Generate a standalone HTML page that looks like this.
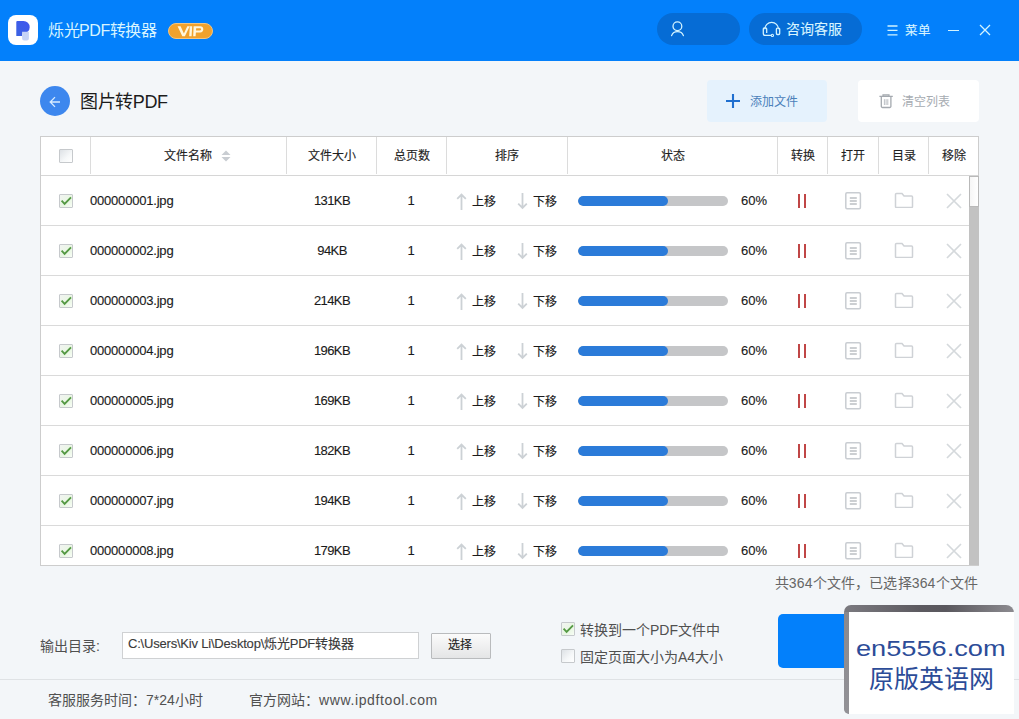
<!DOCTYPE html><html lang="zh-CN"><head><meta charset="utf-8"><style>
*{margin:0;padding:0;box-sizing:border-box}
html,body{width:1019px;height:719px;overflow:hidden;background:#f3f6f9;font-family:"Liberation Sans",sans-serif;color:#333}
.a{position:absolute}
#hdr{left:0;top:0;width:1019px;height:61px;background:#0380fb}
.logo{left:8px;top:15px;width:30px;height:30px;background:#fff;border-radius:8px}
.title{left:48px;top:20px;font-size:16px;line-height:22px;color:#d8f4ff;white-space:nowrap;letter-spacing:-0.45px}
.vip{left:168px;top:23px;width:45px;height:16px;border-radius:8px;background:#f0a22e;border:1px solid #f4c57e}
.pill{top:13px;height:32px;border-radius:16px;background:#066cd5}
.htxt{-webkit-text-stroke:0.12px currentColor;color:#d8f4ff;font-size:14px;line-height:20px;white-space:nowrap}
.back{left:40px;top:86px;width:30px;height:30px;border-radius:15px;background:#3d87ee}
.ptitle{left:80px;top:90px;font-size:18px;line-height:24px;color:#1c1c1c;white-space:nowrap;letter-spacing:-0.4px}
.btnadd{left:707px;top:80px;width:120px;height:42px;background:#e5f2fd;border-radius:4px}
.btnclr{left:858px;top:80px;width:121px;height:42px;background:#fff;border-radius:4px}
#tbl{left:40px;top:136px;width:939px;height:430px;background:#fff;border:1px solid #cdcdcd}
.th{-webkit-text-stroke:0.15px currentColor;font-size:12px;line-height:16px;color:#1f1f1f;white-space:nowrap;top:148px}
.vl{width:1px;background:#dcdcdc;top:137px;height:37px}
.hl{left:41px;width:928px;height:1px;background:#dadada}
.td{-webkit-text-stroke:0.12px currentColor;font-size:13px;line-height:16px;color:#1a1a1a;white-space:nowrap}
.tdc{-webkit-text-stroke:0.15px currentColor;font-size:12px;line-height:16px;color:#1a1a1a;white-space:nowrap}
.cb{width:14px;height:14px;border:1px solid #c6c9cc;background:linear-gradient(135deg,#dde1e5,#f6f8f9 60%,#fff);border-radius:1px}
.cbk{background:linear-gradient(135deg,#f2f4f2,#e8f6e2 60%,#f8fdf6)}
.prog{left:578px;width:150px;height:10px;border-radius:5px;background:#c5c6c8;overflow:hidden}
.prog i{display:block;width:90px;height:10px;border-radius:5px;background:#2b7bd9}
.foot{font-size:14px;line-height:18px;color:#505050;white-space:nowrap}
</style></head><body>
<div id="hdr" class="a"></div>
<div class="a logo"><svg width="30" height="30" viewBox="0 0 30 30" style="position:absolute;left:0;top:0"><defs><linearGradient id="pg" x1="0" y1="1" x2="1" y2="0"><stop offset="0" stop-color="#3a62e2"/><stop offset="1" stop-color="#4157ee"/></linearGradient></defs><path d="M9.3 6h6.2a6.2 6.2 0 0 1 0 12.4H14v2.6H8.3V7a1 1 0 0 1 1-1z" fill="url(#pg)"/><path d="M14.1 16.8h6.8v6.6a2 2 0 0 1-2 2h-2.8a2 2 0 0 1-2-2z" fill="#c6d3f6"/></svg></div>
<div class="a title">烁光PDF转换器</div>
<div class="a vip"><svg width="45" height="16" viewBox="0 0 45 16" style="position:absolute;left:-1px;top:-1px"><path d="M9.6 3.2h3l3.3 7.2 3.4-7.2h2.4l-4.8 10h-2.6z M21.8 3.2h2.4l-0.6 10h-2.4z M25.6 3.2h6.6a3.1 3.1 0 0 1 0 6.2h-4.3l-0.3 3.8h-2.4z M28.2 5.2l-0.2 2.3h4a1.15 1.15 0 0 0 0-2.3z" fill="#fff6dc"/></svg></div>
<div class="a pill" style="left:657px;width:83px"></div>
<svg class="a" style="left:670px;top:21px" width="16" height="16" viewBox="0 0 16 16"><circle cx="7.4" cy="5.3" r="4.4" fill="none" stroke="#d2f3ff" stroke-width="1.3"/><path d="M1.6 14.6A6.2 5.6 0 0 1 13.4 14.6" fill="none" stroke="#d2f3ff" stroke-width="1.3" stroke-linecap="round"/></svg>
<div class="a pill" style="left:749px;width:113px"></div>
<svg class="a" style="left:762px;top:21px" width="19" height="17" viewBox="0 0 19 17"><path d="M2.8 8.2A6.85 6.85 0 0 1 16.5 8.2" fill="none" stroke="#d2f3ff" stroke-width="1.3"/><path d="M4.7 12V8a1 1 0 0 0-1-1h-1.4a1 1 0 0 0-1 1v4.4a2 2 0 0 0 2 2H9.3" fill="none" stroke="#d2f3ff" stroke-width="1.3"/><circle cx="10.4" cy="14.4" r="1.1" fill="none" stroke="#d2f3ff" stroke-width="1.1"/><rect x="14.4" y="7.1" width="3.3" height="6.4" rx="1" fill="none" stroke="#d2f3ff" stroke-width="1.3"/></svg>
<div class="a htxt" style="left:786px;top:19px">咨询客服</div>
<svg class="a" style="left:887px;top:25px" width="12" height="11" viewBox="0 0 12 11"><path d="M0.5 1h10M0.5 5.4h10M0.5 9.8h10" stroke="#d2f3ff" stroke-width="1.3"/></svg>
<div class="a htxt" style="left:905px;top:20.5px;font-size:12.5px">菜单</div>
<div class="a" style="left:948px;top:30px;width:11px;height:1.4px;background:#d2f3ff"></div>
<svg class="a" style="left:979px;top:24px" width="12" height="12" viewBox="0 0 12 12"><path d="M1 1l10 10M11 1L1 11" stroke="#d2f3ff" stroke-width="1.3"/></svg>
<div class="a back"><svg width="30" height="30" viewBox="0 0 30 30"><path d="M20 16h-9.5M15 11.1l-4.8 4.9 4.8 4.9" fill="none" stroke="#d8ecff" stroke-width="1.3"/></svg></div>
<div class="a ptitle">图片转PDF</div>
<div class="a btnadd"></div>
<svg class="a" style="left:726px;top:94px" width="14" height="14" viewBox="0 0 14 14"><path d="M7 0v14M0 7h14" stroke="#1f6fcf" stroke-width="2.1"/></svg>
<div class="a" style="left:750px;top:94px;font-size:12px;line-height:16px;color:#4a80ba">添加文件</div>
<div class="a btnclr"></div>
<svg class="a" style="left:879px;top:94px" width="15" height="15" viewBox="0 0 15 15"><path d="M0.4 2.3h13.4M4 2.2V0.8h6v1.4" fill="none" stroke="#a4a9af" stroke-width="1.2"/><path d="M2.3 2.5v9.8a1.2 1.2 0 0 0 1.2 1.2h7.2a1.2 1.2 0 0 0 1.2-1.2V2.5" fill="none" stroke="#a4a9af" stroke-width="1.3"/><path d="M5.4 5.2v5.8M7.1 5.2v5.8M8.8 5.2v5.8" stroke="#b4b8bd" stroke-width="0.9"/></svg>
<div class="a" style="left:902px;top:94px;font-size:12px;line-height:16px;color:#a6abb1">清空列表</div>
<div id="tbl" class="a"></div>
<div class="a vl" style="left:90px"></div>
<div class="a vl" style="left:286px"></div>
<div class="a vl" style="left:376px"></div>
<div class="a vl" style="left:446px"></div>
<div class="a vl" style="left:567px"></div>
<div class="a vl" style="left:777px"></div>
<div class="a vl" style="left:827px"></div>
<div class="a vl" style="left:878px"></div>
<div class="a vl" style="left:928px"></div>
<div class="a" style="left:41px;top:175px;width:937px;height:1px;background:#d6d6d6"></div>
<div class="a cb" style="left:59px;top:149px"></div>
<div class="a th" style="left:164px">文件名称</div>
<div class="a th" style="left:308px">文件大小</div>
<div class="a th" style="left:394px">总页数</div>
<div class="a th" style="left:495px">排序</div>
<div class="a th" style="left:661px">状态</div>
<div class="a th" style="left:791px">转换</div>
<div class="a th" style="left:841px">打开</div>
<div class="a th" style="left:892px">目录</div>
<div class="a th" style="left:942px">移除</div>
<svg class="a" style="left:221px;top:150px" width="10" height="12" viewBox="0 0 10 12"><path d="M5 0.5L9.5 5H0.5z M5 11.5L9.5 7H0.5z" fill="#c9cdd2"/></svg>
<div class="a cb cbk" style="left:59px;top:194px"><svg width="12" height="12" viewBox="0 0 12 12" style="position:absolute;left:0;top:0"><path d="M1.6 5.6l3 3.2 6.4-6.4" fill="none" stroke="#559a44" stroke-width="1.9"/></svg></div>
<div class="a td" style="left:90px;top:193px;letter-spacing:-0.2px">000000001.jpg</div>
<div class="a td" style="left:287px;width:90px;text-align:center;top:193px;letter-spacing:-0.6px">131KB</div>
<div class="a td" style="left:376px;width:70px;text-align:center;top:193px">1</div>
<svg class="a" style="left:456px;top:193px" width="11" height="17" viewBox="0 0 11 17"><path d="M5.5 1.5v15.5M1.2 5.8l4.3-4.3 4.3 4.3" fill="none" stroke="#ccd1d5" stroke-width="1.8"/></svg>
<div class="a tdc" style="left:472px;top:194px">上移</div>
<svg class="a" style="left:517px;top:193px" width="11" height="17" viewBox="0 0 11 17"><path d="M5.5 0v15M1.2 10.7l4.3 4.3 4.3-4.3" fill="none" stroke="#ccd1d5" stroke-width="1.8"/></svg>
<div class="a tdc" style="left:533px;top:194px">下移</div>
<div class="a prog" style="top:196px"><i></i></div>
<div class="a td" style="left:741px;top:193px">60%</div>
<div class="a" style="left:798px;top:194px;width:2.3px;height:14px;background:#c04646"></div>
<div class="a" style="left:803.7px;top:194px;width:2.3px;height:14px;background:#c04646"></div>
<svg class="a" style="left:845px;top:192px" width="17" height="18" viewBox="0 0 17 18"><rect x="0.8" y="0.8" width="14.6" height="16" rx="1.2" fill="none" stroke="#c9cdd2" stroke-width="1.5"/><path d="M4.8 6h7M4.8 9h7M4.8 12h7" stroke="#bcc0c4" stroke-width="1.3"/></svg>
<svg class="a" style="left:894px;top:192px" width="20" height="16" viewBox="0 0 20 16"><path d="M1.5 2.5a1 1 0 0 1 1-1h5.5l2 2.5h7.5a1 1 0 0 1 1 1v9.5a1 1 0 0 1-1 1h-15a1 1 0 0 1-1-1z" fill="none" stroke="#cfd2d6" stroke-width="1.5"/></svg>
<svg class="a" style="left:946px;top:193px" width="16" height="16" viewBox="0 0 16 16"><path d="M1 1l14 14M15 1L1 15" stroke="#d5d9dc" stroke-width="1.7"/></svg>
<div class="a hl" style="top:225px"></div>
<div class="a cb cbk" style="left:59px;top:244px"><svg width="12" height="12" viewBox="0 0 12 12" style="position:absolute;left:0;top:0"><path d="M1.6 5.6l3 3.2 6.4-6.4" fill="none" stroke="#559a44" stroke-width="1.9"/></svg></div>
<div class="a td" style="left:90px;top:243px;letter-spacing:-0.2px">000000002.jpg</div>
<div class="a td" style="left:287px;width:90px;text-align:center;top:243px;letter-spacing:-0.6px">94KB</div>
<div class="a td" style="left:376px;width:70px;text-align:center;top:243px">1</div>
<svg class="a" style="left:456px;top:243px" width="11" height="17" viewBox="0 0 11 17"><path d="M5.5 1.5v15.5M1.2 5.8l4.3-4.3 4.3 4.3" fill="none" stroke="#ccd1d5" stroke-width="1.8"/></svg>
<div class="a tdc" style="left:472px;top:244px">上移</div>
<svg class="a" style="left:517px;top:243px" width="11" height="17" viewBox="0 0 11 17"><path d="M5.5 0v15M1.2 10.7l4.3 4.3 4.3-4.3" fill="none" stroke="#ccd1d5" stroke-width="1.8"/></svg>
<div class="a tdc" style="left:533px;top:244px">下移</div>
<div class="a prog" style="top:246px"><i></i></div>
<div class="a td" style="left:741px;top:243px">60%</div>
<div class="a" style="left:798px;top:244px;width:2.3px;height:14px;background:#c04646"></div>
<div class="a" style="left:803.7px;top:244px;width:2.3px;height:14px;background:#c04646"></div>
<svg class="a" style="left:845px;top:242px" width="17" height="18" viewBox="0 0 17 18"><rect x="0.8" y="0.8" width="14.6" height="16" rx="1.2" fill="none" stroke="#c9cdd2" stroke-width="1.5"/><path d="M4.8 6h7M4.8 9h7M4.8 12h7" stroke="#bcc0c4" stroke-width="1.3"/></svg>
<svg class="a" style="left:894px;top:242px" width="20" height="16" viewBox="0 0 20 16"><path d="M1.5 2.5a1 1 0 0 1 1-1h5.5l2 2.5h7.5a1 1 0 0 1 1 1v9.5a1 1 0 0 1-1 1h-15a1 1 0 0 1-1-1z" fill="none" stroke="#cfd2d6" stroke-width="1.5"/></svg>
<svg class="a" style="left:946px;top:243px" width="16" height="16" viewBox="0 0 16 16"><path d="M1 1l14 14M15 1L1 15" stroke="#d5d9dc" stroke-width="1.7"/></svg>
<div class="a hl" style="top:275px"></div>
<div class="a cb cbk" style="left:59px;top:294px"><svg width="12" height="12" viewBox="0 0 12 12" style="position:absolute;left:0;top:0"><path d="M1.6 5.6l3 3.2 6.4-6.4" fill="none" stroke="#559a44" stroke-width="1.9"/></svg></div>
<div class="a td" style="left:90px;top:293px;letter-spacing:-0.2px">000000003.jpg</div>
<div class="a td" style="left:287px;width:90px;text-align:center;top:293px;letter-spacing:-0.6px">214KB</div>
<div class="a td" style="left:376px;width:70px;text-align:center;top:293px">1</div>
<svg class="a" style="left:456px;top:293px" width="11" height="17" viewBox="0 0 11 17"><path d="M5.5 1.5v15.5M1.2 5.8l4.3-4.3 4.3 4.3" fill="none" stroke="#ccd1d5" stroke-width="1.8"/></svg>
<div class="a tdc" style="left:472px;top:294px">上移</div>
<svg class="a" style="left:517px;top:293px" width="11" height="17" viewBox="0 0 11 17"><path d="M5.5 0v15M1.2 10.7l4.3 4.3 4.3-4.3" fill="none" stroke="#ccd1d5" stroke-width="1.8"/></svg>
<div class="a tdc" style="left:533px;top:294px">下移</div>
<div class="a prog" style="top:296px"><i></i></div>
<div class="a td" style="left:741px;top:293px">60%</div>
<div class="a" style="left:798px;top:294px;width:2.3px;height:14px;background:#c04646"></div>
<div class="a" style="left:803.7px;top:294px;width:2.3px;height:14px;background:#c04646"></div>
<svg class="a" style="left:845px;top:292px" width="17" height="18" viewBox="0 0 17 18"><rect x="0.8" y="0.8" width="14.6" height="16" rx="1.2" fill="none" stroke="#c9cdd2" stroke-width="1.5"/><path d="M4.8 6h7M4.8 9h7M4.8 12h7" stroke="#bcc0c4" stroke-width="1.3"/></svg>
<svg class="a" style="left:894px;top:292px" width="20" height="16" viewBox="0 0 20 16"><path d="M1.5 2.5a1 1 0 0 1 1-1h5.5l2 2.5h7.5a1 1 0 0 1 1 1v9.5a1 1 0 0 1-1 1h-15a1 1 0 0 1-1-1z" fill="none" stroke="#cfd2d6" stroke-width="1.5"/></svg>
<svg class="a" style="left:946px;top:293px" width="16" height="16" viewBox="0 0 16 16"><path d="M1 1l14 14M15 1L1 15" stroke="#d5d9dc" stroke-width="1.7"/></svg>
<div class="a hl" style="top:325px"></div>
<div class="a cb cbk" style="left:59px;top:344px"><svg width="12" height="12" viewBox="0 0 12 12" style="position:absolute;left:0;top:0"><path d="M1.6 5.6l3 3.2 6.4-6.4" fill="none" stroke="#559a44" stroke-width="1.9"/></svg></div>
<div class="a td" style="left:90px;top:343px;letter-spacing:-0.2px">000000004.jpg</div>
<div class="a td" style="left:287px;width:90px;text-align:center;top:343px;letter-spacing:-0.6px">196KB</div>
<div class="a td" style="left:376px;width:70px;text-align:center;top:343px">1</div>
<svg class="a" style="left:456px;top:343px" width="11" height="17" viewBox="0 0 11 17"><path d="M5.5 1.5v15.5M1.2 5.8l4.3-4.3 4.3 4.3" fill="none" stroke="#ccd1d5" stroke-width="1.8"/></svg>
<div class="a tdc" style="left:472px;top:344px">上移</div>
<svg class="a" style="left:517px;top:343px" width="11" height="17" viewBox="0 0 11 17"><path d="M5.5 0v15M1.2 10.7l4.3 4.3 4.3-4.3" fill="none" stroke="#ccd1d5" stroke-width="1.8"/></svg>
<div class="a tdc" style="left:533px;top:344px">下移</div>
<div class="a prog" style="top:346px"><i></i></div>
<div class="a td" style="left:741px;top:343px">60%</div>
<div class="a" style="left:798px;top:344px;width:2.3px;height:14px;background:#c04646"></div>
<div class="a" style="left:803.7px;top:344px;width:2.3px;height:14px;background:#c04646"></div>
<svg class="a" style="left:845px;top:342px" width="17" height="18" viewBox="0 0 17 18"><rect x="0.8" y="0.8" width="14.6" height="16" rx="1.2" fill="none" stroke="#c9cdd2" stroke-width="1.5"/><path d="M4.8 6h7M4.8 9h7M4.8 12h7" stroke="#bcc0c4" stroke-width="1.3"/></svg>
<svg class="a" style="left:894px;top:342px" width="20" height="16" viewBox="0 0 20 16"><path d="M1.5 2.5a1 1 0 0 1 1-1h5.5l2 2.5h7.5a1 1 0 0 1 1 1v9.5a1 1 0 0 1-1 1h-15a1 1 0 0 1-1-1z" fill="none" stroke="#cfd2d6" stroke-width="1.5"/></svg>
<svg class="a" style="left:946px;top:343px" width="16" height="16" viewBox="0 0 16 16"><path d="M1 1l14 14M15 1L1 15" stroke="#d5d9dc" stroke-width="1.7"/></svg>
<div class="a hl" style="top:375px"></div>
<div class="a cb cbk" style="left:59px;top:394px"><svg width="12" height="12" viewBox="0 0 12 12" style="position:absolute;left:0;top:0"><path d="M1.6 5.6l3 3.2 6.4-6.4" fill="none" stroke="#559a44" stroke-width="1.9"/></svg></div>
<div class="a td" style="left:90px;top:393px;letter-spacing:-0.2px">000000005.jpg</div>
<div class="a td" style="left:287px;width:90px;text-align:center;top:393px;letter-spacing:-0.6px">169KB</div>
<div class="a td" style="left:376px;width:70px;text-align:center;top:393px">1</div>
<svg class="a" style="left:456px;top:393px" width="11" height="17" viewBox="0 0 11 17"><path d="M5.5 1.5v15.5M1.2 5.8l4.3-4.3 4.3 4.3" fill="none" stroke="#ccd1d5" stroke-width="1.8"/></svg>
<div class="a tdc" style="left:472px;top:394px">上移</div>
<svg class="a" style="left:517px;top:393px" width="11" height="17" viewBox="0 0 11 17"><path d="M5.5 0v15M1.2 10.7l4.3 4.3 4.3-4.3" fill="none" stroke="#ccd1d5" stroke-width="1.8"/></svg>
<div class="a tdc" style="left:533px;top:394px">下移</div>
<div class="a prog" style="top:396px"><i></i></div>
<div class="a td" style="left:741px;top:393px">60%</div>
<div class="a" style="left:798px;top:394px;width:2.3px;height:14px;background:#c04646"></div>
<div class="a" style="left:803.7px;top:394px;width:2.3px;height:14px;background:#c04646"></div>
<svg class="a" style="left:845px;top:392px" width="17" height="18" viewBox="0 0 17 18"><rect x="0.8" y="0.8" width="14.6" height="16" rx="1.2" fill="none" stroke="#c9cdd2" stroke-width="1.5"/><path d="M4.8 6h7M4.8 9h7M4.8 12h7" stroke="#bcc0c4" stroke-width="1.3"/></svg>
<svg class="a" style="left:894px;top:392px" width="20" height="16" viewBox="0 0 20 16"><path d="M1.5 2.5a1 1 0 0 1 1-1h5.5l2 2.5h7.5a1 1 0 0 1 1 1v9.5a1 1 0 0 1-1 1h-15a1 1 0 0 1-1-1z" fill="none" stroke="#cfd2d6" stroke-width="1.5"/></svg>
<svg class="a" style="left:946px;top:393px" width="16" height="16" viewBox="0 0 16 16"><path d="M1 1l14 14M15 1L1 15" stroke="#d5d9dc" stroke-width="1.7"/></svg>
<div class="a hl" style="top:425px"></div>
<div class="a cb cbk" style="left:59px;top:444px"><svg width="12" height="12" viewBox="0 0 12 12" style="position:absolute;left:0;top:0"><path d="M1.6 5.6l3 3.2 6.4-6.4" fill="none" stroke="#559a44" stroke-width="1.9"/></svg></div>
<div class="a td" style="left:90px;top:443px;letter-spacing:-0.2px">000000006.jpg</div>
<div class="a td" style="left:287px;width:90px;text-align:center;top:443px;letter-spacing:-0.6px">182KB</div>
<div class="a td" style="left:376px;width:70px;text-align:center;top:443px">1</div>
<svg class="a" style="left:456px;top:443px" width="11" height="17" viewBox="0 0 11 17"><path d="M5.5 1.5v15.5M1.2 5.8l4.3-4.3 4.3 4.3" fill="none" stroke="#ccd1d5" stroke-width="1.8"/></svg>
<div class="a tdc" style="left:472px;top:444px">上移</div>
<svg class="a" style="left:517px;top:443px" width="11" height="17" viewBox="0 0 11 17"><path d="M5.5 0v15M1.2 10.7l4.3 4.3 4.3-4.3" fill="none" stroke="#ccd1d5" stroke-width="1.8"/></svg>
<div class="a tdc" style="left:533px;top:444px">下移</div>
<div class="a prog" style="top:446px"><i></i></div>
<div class="a td" style="left:741px;top:443px">60%</div>
<div class="a" style="left:798px;top:444px;width:2.3px;height:14px;background:#c04646"></div>
<div class="a" style="left:803.7px;top:444px;width:2.3px;height:14px;background:#c04646"></div>
<svg class="a" style="left:845px;top:442px" width="17" height="18" viewBox="0 0 17 18"><rect x="0.8" y="0.8" width="14.6" height="16" rx="1.2" fill="none" stroke="#c9cdd2" stroke-width="1.5"/><path d="M4.8 6h7M4.8 9h7M4.8 12h7" stroke="#bcc0c4" stroke-width="1.3"/></svg>
<svg class="a" style="left:894px;top:442px" width="20" height="16" viewBox="0 0 20 16"><path d="M1.5 2.5a1 1 0 0 1 1-1h5.5l2 2.5h7.5a1 1 0 0 1 1 1v9.5a1 1 0 0 1-1 1h-15a1 1 0 0 1-1-1z" fill="none" stroke="#cfd2d6" stroke-width="1.5"/></svg>
<svg class="a" style="left:946px;top:443px" width="16" height="16" viewBox="0 0 16 16"><path d="M1 1l14 14M15 1L1 15" stroke="#d5d9dc" stroke-width="1.7"/></svg>
<div class="a hl" style="top:475px"></div>
<div class="a cb cbk" style="left:59px;top:494px"><svg width="12" height="12" viewBox="0 0 12 12" style="position:absolute;left:0;top:0"><path d="M1.6 5.6l3 3.2 6.4-6.4" fill="none" stroke="#559a44" stroke-width="1.9"/></svg></div>
<div class="a td" style="left:90px;top:493px;letter-spacing:-0.2px">000000007.jpg</div>
<div class="a td" style="left:287px;width:90px;text-align:center;top:493px;letter-spacing:-0.6px">194KB</div>
<div class="a td" style="left:376px;width:70px;text-align:center;top:493px">1</div>
<svg class="a" style="left:456px;top:493px" width="11" height="17" viewBox="0 0 11 17"><path d="M5.5 1.5v15.5M1.2 5.8l4.3-4.3 4.3 4.3" fill="none" stroke="#ccd1d5" stroke-width="1.8"/></svg>
<div class="a tdc" style="left:472px;top:494px">上移</div>
<svg class="a" style="left:517px;top:493px" width="11" height="17" viewBox="0 0 11 17"><path d="M5.5 0v15M1.2 10.7l4.3 4.3 4.3-4.3" fill="none" stroke="#ccd1d5" stroke-width="1.8"/></svg>
<div class="a tdc" style="left:533px;top:494px">下移</div>
<div class="a prog" style="top:496px"><i></i></div>
<div class="a td" style="left:741px;top:493px">60%</div>
<div class="a" style="left:798px;top:494px;width:2.3px;height:14px;background:#c04646"></div>
<div class="a" style="left:803.7px;top:494px;width:2.3px;height:14px;background:#c04646"></div>
<svg class="a" style="left:845px;top:492px" width="17" height="18" viewBox="0 0 17 18"><rect x="0.8" y="0.8" width="14.6" height="16" rx="1.2" fill="none" stroke="#c9cdd2" stroke-width="1.5"/><path d="M4.8 6h7M4.8 9h7M4.8 12h7" stroke="#bcc0c4" stroke-width="1.3"/></svg>
<svg class="a" style="left:894px;top:492px" width="20" height="16" viewBox="0 0 20 16"><path d="M1.5 2.5a1 1 0 0 1 1-1h5.5l2 2.5h7.5a1 1 0 0 1 1 1v9.5a1 1 0 0 1-1 1h-15a1 1 0 0 1-1-1z" fill="none" stroke="#cfd2d6" stroke-width="1.5"/></svg>
<svg class="a" style="left:946px;top:493px" width="16" height="16" viewBox="0 0 16 16"><path d="M1 1l14 14M15 1L1 15" stroke="#d5d9dc" stroke-width="1.7"/></svg>
<div class="a hl" style="top:525px"></div>
<div class="a cb cbk" style="left:59px;top:544px"><svg width="12" height="12" viewBox="0 0 12 12" style="position:absolute;left:0;top:0"><path d="M1.6 5.6l3 3.2 6.4-6.4" fill="none" stroke="#559a44" stroke-width="1.9"/></svg></div>
<div class="a td" style="left:90px;top:543px;letter-spacing:-0.2px">000000008.jpg</div>
<div class="a td" style="left:287px;width:90px;text-align:center;top:543px;letter-spacing:-0.6px">179KB</div>
<div class="a td" style="left:376px;width:70px;text-align:center;top:543px">1</div>
<svg class="a" style="left:456px;top:543px" width="11" height="17" viewBox="0 0 11 17"><path d="M5.5 1.5v15.5M1.2 5.8l4.3-4.3 4.3 4.3" fill="none" stroke="#ccd1d5" stroke-width="1.8"/></svg>
<div class="a tdc" style="left:472px;top:544px">上移</div>
<svg class="a" style="left:517px;top:543px" width="11" height="17" viewBox="0 0 11 17"><path d="M5.5 0v15M1.2 10.7l4.3 4.3 4.3-4.3" fill="none" stroke="#ccd1d5" stroke-width="1.8"/></svg>
<div class="a tdc" style="left:533px;top:544px">下移</div>
<div class="a prog" style="top:546px"><i></i></div>
<div class="a td" style="left:741px;top:543px">60%</div>
<div class="a" style="left:798px;top:544px;width:2.3px;height:14px;background:#c04646"></div>
<div class="a" style="left:803.7px;top:544px;width:2.3px;height:14px;background:#c04646"></div>
<svg class="a" style="left:845px;top:542px" width="17" height="18" viewBox="0 0 17 18"><rect x="0.8" y="0.8" width="14.6" height="16" rx="1.2" fill="none" stroke="#c9cdd2" stroke-width="1.5"/><path d="M4.8 6h7M4.8 9h7M4.8 12h7" stroke="#bcc0c4" stroke-width="1.3"/></svg>
<svg class="a" style="left:894px;top:542px" width="20" height="16" viewBox="0 0 20 16"><path d="M1.5 2.5a1 1 0 0 1 1-1h5.5l2 2.5h7.5a1 1 0 0 1 1 1v9.5a1 1 0 0 1-1 1h-15a1 1 0 0 1-1-1z" fill="none" stroke="#cfd2d6" stroke-width="1.5"/></svg>
<svg class="a" style="left:946px;top:543px" width="16" height="16" viewBox="0 0 16 16"><path d="M1 1l14 14M15 1L1 15" stroke="#d5d9dc" stroke-width="1.7"/></svg>
<div class="a" style="left:969px;top:176px;width:10px;height:390px;background:#c2c2c2"></div>
<div class="a" style="left:969px;top:176px;width:10px;height:31px;background:linear-gradient(90deg,#f6f6f6,#fff);border:1px solid #b9b9b9"></div>
<div class="a" style="left:40px;top:565px;width:939px;height:1px;background:#cdcdcd"></div>
<div class="a foot" style="right:41px;top:574px;font-size:14px;color:#666;letter-spacing:0.15px">共364个文件，已选择364个文件</div>
<div class="a foot" style="left:40px;top:637px;font-size:14px">输出目录:</div>
<div class="a" style="left:122px;top:632px;width:297px;height:27px;background:#fff;border:1px solid #cfd1d3"></div>
<div class="a td" style="left:128px;top:636px;font-size:13px;color:#3a3a3a;letter-spacing:-0.2px">C:\Users\Kiv Li\Desktop\烁光PDF转换器</div>
<div class="a" style="left:431px;top:633px;width:60px;height:26px;border:1px solid #b9bbbd;background:linear-gradient(#fbfbfb,#e4e5e6);border-radius:1px"></div>
<div class="a tdc" style="left:448px;top:637px;font-size:12px;color:#222">选择</div>
<div class="a cb cbk" style="left:561px;top:622px"><svg width="12" height="12" viewBox="0 0 12 12" style="position:absolute;left:0;top:0"><path d="M1.6 5.6l3 3.2 6.4-6.4" fill="none" stroke="#559a44" stroke-width="1.9"/></svg></div>
<div class="a foot" style="left:580px;top:621px">转换到一个PDF文件中</div>
<div class="a cb" style="left:561px;top:649px"></div>
<div class="a foot" style="left:580px;top:648px">固定页面大小为A4大小</div>
<div class="a" style="left:778px;top:614px;width:140px;height:54px;background:#0380fb;border-radius:5px"></div>
<div class="a" style="left:0;top:679px;width:1019px;height:1px;background:#dfe2e5"></div>
<div class="a foot" style="left:48px;top:691px">客服服务时间：7*24小时</div>
<div class="a foot" style="left:249px;top:691px">官方网站：<span style="letter-spacing:0.62px">www.ipdftool.com</span></div>
<div class="a" style="left:844px;top:605px;width:170px;height:109px;border-radius:7px 8px 0 7px;background:linear-gradient(90deg,#7b7a80,#5c5a60 45%,#5a585e 60%,#8c8b90)"></div>
<div class="a" style="left:844px;top:612px;width:5px;height:102px;border-radius:0 0 0 7px;background:linear-gradient(#8a898e,#939297)"></div>
<div class="a" style="left:849px;top:612px;width:165px;height:102px;background:#fff"></div>
<div class="a" style="left:856px;top:633.5px;font-size:22px;line-height:30px;color:#2c4c98;white-space:nowrap;transform:scaleX(1.235);transform-origin:0 0">en5556.com</div>
<div class="a" style="left:869px;top:664px;font-size:25px;line-height:30px;color:#2c4c98;white-space:nowrap">原版英语网</div>
</body></html>
